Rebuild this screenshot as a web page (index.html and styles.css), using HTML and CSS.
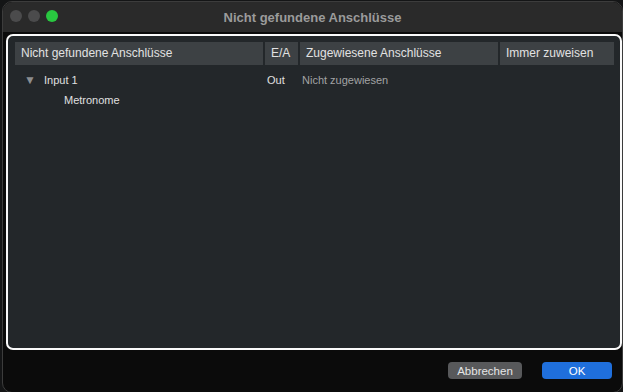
FILE: index.html
```html
<!DOCTYPE html>
<html lang="de">
<head>
    <meta charset="UTF-8">
    <title>Nicht gefundene Anschlüsse</title>
    <link rel="stylesheet" href="styles.css">
</head>
<body>
    <div class="window">
        <div class="titlebar">
            <div class="lights">
                <span class="light"></span>
                <span class="light"></span>
                <span class="light green"></span>
            </div>
            <div class="title">Nicht gefundene Anschlüsse</div>
        </div>

        <div class="panel">
            <div class="table-head">
                <div class="col col-name">Nicht gefundene Anschlüsse</div>
                <div class="col col-io">E/A</div>
                <div class="col col-assigned">Zugewiesene Anschlüsse</div>
                <div class="col col-always">Immer zuweisen</div>
            </div>

            <div class="row">
                <div class="col col-name"><span class="arrow">▼</span>Input 1</div>
                <div class="col col-io">Out</div>
                <div class="col col-assigned muted">Nicht zugewiesen</div>
                <div class="col col-always"></div>
            </div>
            <div class="row">
                <div class="col col-name child">Metronome</div>
            </div>
        </div>

        <div class="footer">
            <button class="btn">Abbrechen</button>
            <button class="btn primary">OK</button>
        </div>
    </div>
</body>
</html>
```

FILE: styles.css
```css
* {
    box-sizing: border-box;
    margin: 0;
    padding: 0;
}

body {
    background-color: #141516;
    font-family: 'Liberation Sans', Arial, sans-serif;
    width: 623px;
    height: 392px;
    overflow: hidden;
    padding: 1px 0 0 2px;
}

.window {
    width: 621px;
    height: 392px;
    background-color: #0b0b0b;
    border: 1px solid #3c3c3c;
    border-radius: 10px;
    display: flex;
    flex-direction: column;
    overflow: hidden;
}

.titlebar {
    height: 30px;
    background-color: #2a2a2a;
    position: relative;
    display: flex;
    align-items: center;
    justify-content: center;
}

.lights {
    position: absolute;
    left: 7px;
    top: 8px;
    display: flex;
    gap: 6px;
}

.light {
    width: 12px;
    height: 12px;
    border-radius: 50%;
    background-color: #4b4b4c;
}

.light.green {
    background-color: #29c740;
}

.title {
    color: #9b9b9b;
    font-size: 13px;
    font-weight: bold;
}

.panel {
    margin: 2px 0 0 3px;
    width: 616px;
    height: 316px;
    background-color: #23272a;
    border: 2px solid #fafafa;
    border-radius: 7px;
    padding: 6px 6px 0 7px;
}

.table-head {
    display: flex;
    gap: 2px;
    height: 23px;
    margin-bottom: 5px;
}

.table-head .col {
    background-color: #3d4144;
    color: #e2e2e2;
    font-size: 12px;
    line-height: 23px;
    padding-left: 6px;
}

.col-name {
    width: 248px;
}

.col-io {
    width: 33px;
}

.col-assigned {
    width: 198px;
}

.col-always {
    flex: 1;
}

.row {
    display: flex;
    gap: 2px;
    height: 20px;
    align-items: center;
}

.row .col {
    color: #e0e0e0;
    font-size: 11px;
    padding-left: 2px;
}

.row .muted {
    color: #a2a3a4;
}

.arrow {
    display: inline-block;
    color: #8c8e90;
    font-size: 12px;
    width: 20px;
    margin-left: 7px;
}

.child {
    padding-left: 49px !important;
}

.footer {
    display: flex;
    justify-content: flex-end;
    gap: 20px;
    padding: 12px 10px 0 0;
}

.btn {
    height: 17px;
    border: none;
    border-radius: 4px;
    background-color: #58595b;
    color: #e6e6e6;
    font-family: 'Liberation Sans', Arial, sans-serif;
    font-size: 11.5px;
    width: 74px;
}

.btn.primary {
    background-color: #1f6fdc;
    color: #ffffff;
    width: 70px;
}
```
